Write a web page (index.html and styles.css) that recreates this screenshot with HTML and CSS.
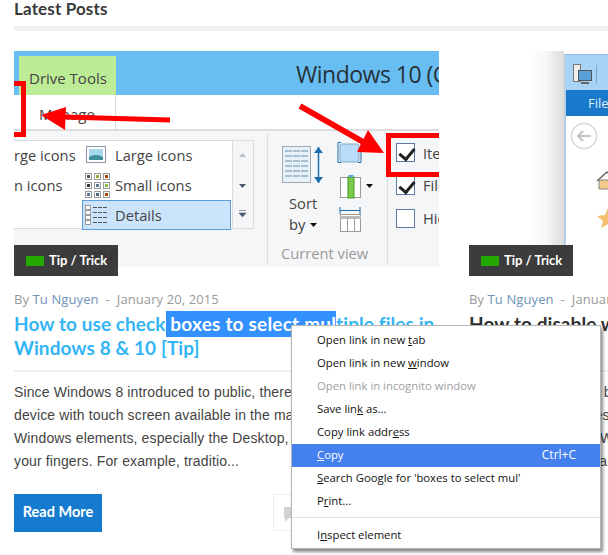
FILE: index.html
```html
<!DOCTYPE html>
<html lang="en">
<head>
<meta charset="utf-8">
<title>Latest Posts</title>
<link rel="stylesheet" href="styles.css">
</head>
<body>
<main class="page">
  <h2 class="section-title">Latest Posts</h2>
  <div class="cards">
    <article class="card">
      <div class="shot shot-one">
        <div class="s1-title">Windows 10 (C:)</div>
        <div class="s1-green">Drive Tools</div>
        <div class="s1-tab">Manage</div>
        <div class="s1-ribbon"></div>
        <div class="s1-gallery"></div>
        <div class="s1-scroll"></div>
        <div class="s1-selected"></div>
        <div class="rb rb-a">rge icons</div>
        <div class="rb rb-b">n icons</div>
        <div class="rb rb-c">Large icons</div>
        <div class="rb rb-d">Small icons</div>
        <div class="rb rb-e">Details</div>
        <div class="rb rb-f">Sort</div>
        <div class="rb rb-g">by</div>
        <div class="rb rb-h">Layout</div>
        <div class="rb rb-i">Current view</div>
        <div class="s1-sep s1-sep-a"></div>
        <div class="s1-sep s1-sep-b"></div>
        <div class="chk chk-a"></div>
        <div class="chk chk-b"></div>
        <div class="chk chk-c"></div>
        <div class="rb rb-j">Item check boxes</div>
        <div class="rb rb-k">File name extensions</div>
        <div class="rb rb-l">Hidden items</div>
        <svg class="overlay" viewBox="0 0 425 216" width="425" height="216" aria-hidden="true">
          <!-- gallery icons (coordinates relative to the picture) -->
          <rect x="72.500" y="95.500" width="19" height="16" fill="#fff" stroke="#8a98a8"/>
          <rect x="75" y="98" width="14" height="11" fill="#a9d6ee"/>
          <path d="M75 106q7-4 14 0v3H75z" fill="#3f8f9b"/>
          <g fill="#fff" stroke="#9a9a9a">
            <rect x="71.500" y="122.500" width="6" height="6"/><rect x="80.500" y="122.500" width="6" height="6"/><rect x="89.500" y="122.500" width="6" height="6"/>
            <rect x="71.500" y="131.500" width="6" height="6"/><rect x="80.500" y="131.500" width="6" height="6"/><rect x="89.500" y="131.500" width="6" height="6"/>
            <rect x="71.500" y="140.500" width="6" height="6"/><rect x="80.500" y="140.500" width="6" height="6"/><rect x="89.500" y="140.500" width="6" height="6"/>
          </g>
          <g>
            <rect x="73" y="124" width="3" height="3" fill="#456"/><rect x="82" y="124" width="3" height="3" fill="#9a3"/><rect x="91" y="124" width="3" height="3" fill="#a40"/>
            <rect x="73" y="133" width="3" height="3" fill="#333"/><rect x="82" y="133" width="3" height="3" fill="#579"/><rect x="91" y="133" width="3" height="3" fill="#8b4"/>
            <rect x="73" y="142" width="3" height="3" fill="#579"/><rect x="82" y="142" width="3" height="3" fill="#468"/><rect x="91" y="142" width="3" height="3" fill="#a40"/>
          </g>
          <g fill="#fff" stroke="#9a9a9a">
            <rect x="71.500" y="154.500" width="5" height="4"/><rect x="71.500" y="159.500" width="5" height="4"/><rect x="71.500" y="164.500" width="5" height="4"/><rect x="71.500" y="169.500" width="5" height="4"/>
          </g>
          <path d="M79 156.500h15M79 161.500h15M79 166.500h15M79 171.500h15" stroke="#555" stroke-width="1" fill="none" stroke-dasharray="4 1"/>
          <!-- scroll arrows -->
          <path d="M225 106l3.500-4 3.500 4z" fill="#b9c0c8"/>
          <path d="M225 133h7l-3.500 4z" fill="#4a5a6e"/>
          <path d="M225 159.500h7M225 162h7l-3.500 4z" fill="#4a5a6e" stroke="#4a5a6e" stroke-width=".6"/>
          <!-- sort by -->
          <rect x="268.500" y="95.500" width="28" height="36" fill="#e6f1f8" stroke="#a3a9af"/>
          <path d="M271 100h23M271 105h23M271 110h23M271 115h23M271 120h23M271 125h23" stroke="#a7bfd0" stroke-width="2" stroke-dasharray="7 1"/>
          <path d="M304.500 96v36" stroke="#1b6fb0" stroke-width="1.500"/>
          <path d="M300 102l4.500-6 4.500 6zM300 126l4.500 6 4.500-6z" fill="#1b6fb0"/>
          <path d="M296 172h7l-3.500 4z" fill="#111"/>
          <!-- size icons -->
          <rect x="326" y="93" width="19" height="18" rx="2" fill="#b8dcfa" stroke="#8ab"/>
          <path d="M327 91.500h-3v20h3M344 91.500h3v20h-3" fill="none" stroke="#1b6fb0"/>
          <path d="M352 96h6l-3 3z" fill="#111"/>
          <rect x="326.500" y="126.500" width="20" height="20" fill="#fff" stroke="#9a9a9a"/>
          <rect x="334" y="126" width="6" height="21" fill="#7ccb4f" stroke="#3d9a1f"/>
          <path d="M334 124h6l-3 3z" fill="#4aa6e8"/>
          <path d="M352 133h7l-3.500 4z" fill="#111"/>
          <path d="M326 159.500h20M326 156v7M346 156v7" stroke="#1b6fb0" fill="none"/>
          <rect x="326.500" y="163.500" width="20" height="17" fill="#fff" stroke="#9a9a9a"/>
          <path d="M326 166.500h21" stroke="#bbb" stroke-width="3"/>
          <path d="M333.500 168v12M340.500 168v12" stroke="#9a9a9a"/>
          <!-- left red bracket and arrow -->
          <path d="M0 32.500h9.500v51H0" fill="none" stroke="#f00" stroke-width="5"/>
          <path d="M156 69 L50 66" stroke="#f00" stroke-width="5"/>
          <path d="M27 64 L52 56 L51 79z" fill="#f00"/>
          <!-- right red box and arrow -->
          <path d="M428 84.500H374.500V123.500h53" fill="none" stroke="#f00" stroke-width="5"/>
          <path d="M286 55 L358 96" stroke="#f00" stroke-width="6"/>
          <path d="M354 79 L343 101 L370 102z" fill="#f00"/>
        </svg>
      </div>
      <div class="badge"><span class="badge-dot"></span>Tip / Trick</div>
      <p class="meta">By <a class="author">Tu Nguyen</a> &nbsp;-&nbsp; January 20, 2015</p>
      <h3 class="post-title post-title-blue">How to use check<mark class="sel"> boxes to select mul</mark>tiple files in Windows 8 &amp; 10 [Tip]</h3>
      <hr class="rule">
      <p class="excerpt">Since Windows 8 introduced to public, there are a lot of<br>device with touch screen available in the market. All of<br>Windows elements, especially the Desktop, are hard to use with<br>your fingers. For example, traditio...</p>
      <div class="actions">
        <a class="read-more">Read More</a>
        <div class="comments">
          <svg width="14" height="16" viewBox="0 0 14 16" aria-hidden="true"><path d="M0 0h14v11H5l-4 4v-4H0z" fill="#d3d3d3"/></svg>
        </div>
      </div>
    </article>

    <article class="card">
      <div class="shot shot-two">
        <div class="s2-shade"></div>
        <div class="s2-window">
          <div class="s2-title">
            <svg width="28" height="24" viewBox="0 0 28 24" aria-hidden="true">
              <rect x=".5" y="1.500" width="7" height="17" fill="#eee" stroke="#777"/>
              <rect x="5.500" y="7.500" width="13" height="10" fill="#5a9fd8" stroke="#555"/>
              <path d="M8 20h8" stroke="#666" stroke-width="2"/>
              <path d="M23.500 2v18" stroke="#7fa6c6"/>
            </svg>
          </div>
          <div class="s2-tabs">File</div>
          <div class="s2-body">
            <svg class="s2-icons" width="44" height="130" viewBox="0 0 44 130" aria-hidden="true">
              <circle cx="18" cy="20" r="12.500" fill="#fff" stroke="#d8d8d8" stroke-width="1.500"/>
              <path d="M25 20H12M17 15l-5 5 5 5" fill="none" stroke="#c4c4c4" stroke-width="2"/>
              <path d="M31 65l10-9 8 7" fill="none" stroke="#666" stroke-width="1.500"/>
              <path d="M33 64h12v9H33z" fill="#f3c98c" stroke="#888"/>
              <path d="M42 92l3 7 8 1-6 5 2 7-7-4-7 4 2-7-6-5 8-1z" fill="#f4c06d"/>
            </svg>
          </div>
        </div>
      </div>
      <div class="badge"><span class="badge-dot"></span>Tip / Trick</div>
      <p class="meta">By <a class="author">Tu Nguyen</a> &nbsp;-&nbsp; January 20, 2015</p>
      <h3 class="post-title">How to disable windows features</h3>
      <hr class="rule">
      <p class="excerpt">Windows 10 has two built-in<br>features that users less often use.<br>especially for home. With<br>these two steps you are</p>
    </article>
  </div>

  <nav class="context-menu">
    <div class="ctx-item">Open link in new <u>t</u>ab</div>
    <div class="ctx-item">Open link in new <u>w</u>indow</div>
    <div class="ctx-item ctx-disabled">Open link in incognito window</div>
    <div class="ctx-item">Save lin<u>k</u> as...</div>
    <div class="ctx-item">Copy link addr<u>e</u>ss</div>
    <div class="ctx-item ctx-active"><span><u>C</u>opy</span><span class="ctx-key">Ctrl+C</span></div>
    <div class="ctx-item"><u>S</u>earch Google for 'boxes to select mul'</div>
    <div class="ctx-item">P<u>r</u>int...</div>
    <div class="ctx-sep"></div>
    <div class="ctx-item">I<u>n</u>spect element</div>
  </nav>
</main>
</body>
</html>
```

FILE: styles.css
```css
* { box-sizing: border-box; }
html, body { margin: 0; height: 555px; overflow: hidden; background: #fff; }
.page { position: relative; height: 555px; padding-left: 14px; overflow: hidden; font-family: "Lato", sans-serif; }

.section-title {
  margin: 0 0 20px;
  width: 594px;
  height: 31px;
  font-size: 17px;
  line-height: 17px;
  letter-spacing: .15px;
  font-weight: 700;
  color: #3a3a3a;
  border-bottom: 5px solid #f0f0f0;
}

.cards { display: grid; grid-template-columns: 425px 425px; column-gap: 30px; }
.card { position: relative; }

.shot { position: relative; height: 216px; overflow: hidden; font-family: "Open Sans", sans-serif; }
.shot-one { background: #f5f6f8; }
.s1-title { position: absolute; left: 282px; top: 5px; height: 44px; line-height: 36px; font-size: 23px; letter-spacing: -.5px; color: #263238; white-space: nowrap; z-index: 2; }
.shot-one::before { content: ""; position: absolute; left: 0; top: 0; width: 425px; height: 44px; background: #68bdf2; }
.shot-one::after { content: ""; position: absolute; left: 0; top: 44px; width: 425px; height: 34px; background: #fff; border-bottom: 2px solid #dcdde0; }
.s1-green { position: absolute; z-index: 2; left: 5px; top: 5px; width: 97px; height: 39px; padding: 12px 0 0 10px; background: #bdec96; font-size: 15px; line-height: 20px; color: #444; }
.s1-tab { position: absolute; z-index: 2; left: 5px; top: 44px; width: 97px; height: 34px; padding: 9px 0 0 20px; border-right: 1px solid #d9d9d9; font-size: 15px; line-height: 20px; color: #444; }
.s1-ribbon { position: absolute; left: 0; top: 78px; width: 425px; height: 138px; background: #f5f6f8; }
.s1-gallery { position: absolute; left: 0; top: 89px; width: 219px; height: 89px; background: #fff; border: 1px solid #dadbdd; border-left: 0; }
.s1-scroll { position: absolute; left: 218px; top: 89px; width: 22px; height: 89px; background: #f5f6f8; border: 1px solid #dadbdd; }
.s1-selected { position: absolute; left: 68px; top: 149px; width: 149px; height: 30px; background: #cce4fb; border: 1px solid #5b9fdd; }
.rb { position: absolute; font-size: 14.700px; line-height: 20px; color: #444; white-space: nowrap; }
.rb-a { left: 0; top: 94px; }
.rb-b { left: 0; top: 124px; }
.rb-c { left: 101px; top: 94px; }
.rb-d { left: 101px; top: 124px; }
.rb-e { left: 101px; top: 154px; }
.rb-f { left: 275px; top: 142px; }
.rb-g { left: 275px; top: 163px; }
.rb-h { left: 58px; top: 193px; color: #9a9a9a; }
.rb-i { left: 267px; top: 192px; color: #9a9a9a; }
.rb-j { left: 409px; top: 92px; }
.rb-k { left: 409px; top: 124px; }
.rb-l { left: 409px; top: 157px; }
.s1-sep { position: absolute; top: 82px; width: 1px; height: 131px; background: #dcdde0; }
.s1-sep-a { left: 253px; }
.s1-sep-b { left: 373px; }
.chk { position: absolute; left: 382px; width: 19px; height: 19px; background: #fff; border: 1px solid #5a7ba6; }
.chk-a { top: 92px; }
.chk-b { top: 125px; }
.chk-c { top: 158px; }
.chk-a::after, .chk-b::after {
  content: "";
  position: absolute;
  left: 5px;
  top: 1px;
  width: 7px;
  height: 12px;
  border: solid #222;
  border-width: 0 3px 3px 0;
  transform: rotate(40deg);
}
.overlay { position: absolute; left: 0; top: 0; z-index: 3; }

.shot-two { background: #fff; }
.s2-shade { position: absolute; left: 60px; top: 0; width: 35px; height: 216px; background: linear-gradient(to right, #fff, #f6f6f6 50%, #dcdcdc); }
.s2-window { position: absolute; left: 95px; top: 3px; width: 60px; height: 213px; background: #fff; border-left: 2px solid #b6cfe6; border-top: 1px solid #8fbbe0; }
.s2-title { height: 35px; padding: 8px 0 0 7px; background: #a9d3f5; }
.s2-tabs { height: 26px; padding-left: 22px; background: #1979ca; color: #dfeefb; font-size: 13px; line-height: 26px; }
.s2-icons { display: block; }

.badge {
  position: absolute;
  left: 0;
  top: 194px;
  width: 104px;
  height: 31px;
  display: flex;
  align-items: center;
  padding: 0 0 2px 12px;
  gap: 5px;
  background: rgba(45, 45, 45, .93);
  color: #fff;
  font-size: 13px;
  font-weight: 700;
}
.badge-dot { width: 18px; height: 10px; margin-top: 2px; background: #23a800; }

.meta { margin: 24px 0 0; height: 17px; font-size: 13px; letter-spacing: .1px; line-height: 17px; color: #999; white-space: nowrap; font-family: "Open Sans", sans-serif; }
.author { color: #6f93b8; }

.post-title { margin: 4px 0 0; height: 48px; font-size: 19px; letter-spacing: .08px; line-height: 24px; font-weight: 700; color: #2f2f2f; white-space: nowrap; }
.post-title-blue { color: #33b5f5; white-space: normal; }
.sel { padding: 1px 0 2px; background: #3390ff; color: #fff; letter-spacing: .2px; }

.rule { margin: 10px 0 0; height: 2px; border: 0; background: #f0f0f0; }

.excerpt { margin: 9px 0 0; font-family: "Liberation Sans", sans-serif; font-size: 14px; letter-spacing: .13px; line-height: 23px; color: #444; white-space: nowrap; }

.actions { margin-top: 21px; display: flex; justify-content: space-between; width: 425px; }
.read-more { width: 88px; height: 38px; padding-bottom: 1px; background: #157bce; color: #fff; font-weight: 700; font-size: 14.500px; line-height: 36px; text-align: center; }
.comments { margin-left: 171px; flex: 1; height: 37px; padding: 12px 0 0 10px; border: 1px solid #eee; }

.context-menu {
  position: absolute;
  left: 291px;
  top: 325px;
  width: 310px;
  height: 224px;
  padding-top: 3px;
  background: #fff;
  border: 1px solid #b5b5b5;
  box-shadow: 2px 3px 3px rgba(0, 0, 0, .45);
  font-family: "Open Sans", sans-serif;
  font-size: 11.300px;
  color: #111;
}
.ctx-item { display: flex; justify-content: flex-start; height: 23px; padding: 0 24px 0 25px; line-height: 22px; white-space: pre-wrap; }
.ctx-item u { text-decoration-thickness: 1px; }
.ctx-disabled { color: #a0a0a0; }
.ctx-active { justify-content: space-between; background: #4580ef; color: #fff; }
.ctx-key { font-size: 12px; }
.ctx-sep { height: 1px; margin: 4px 0 6px; background: #e0e0e0; }
```
